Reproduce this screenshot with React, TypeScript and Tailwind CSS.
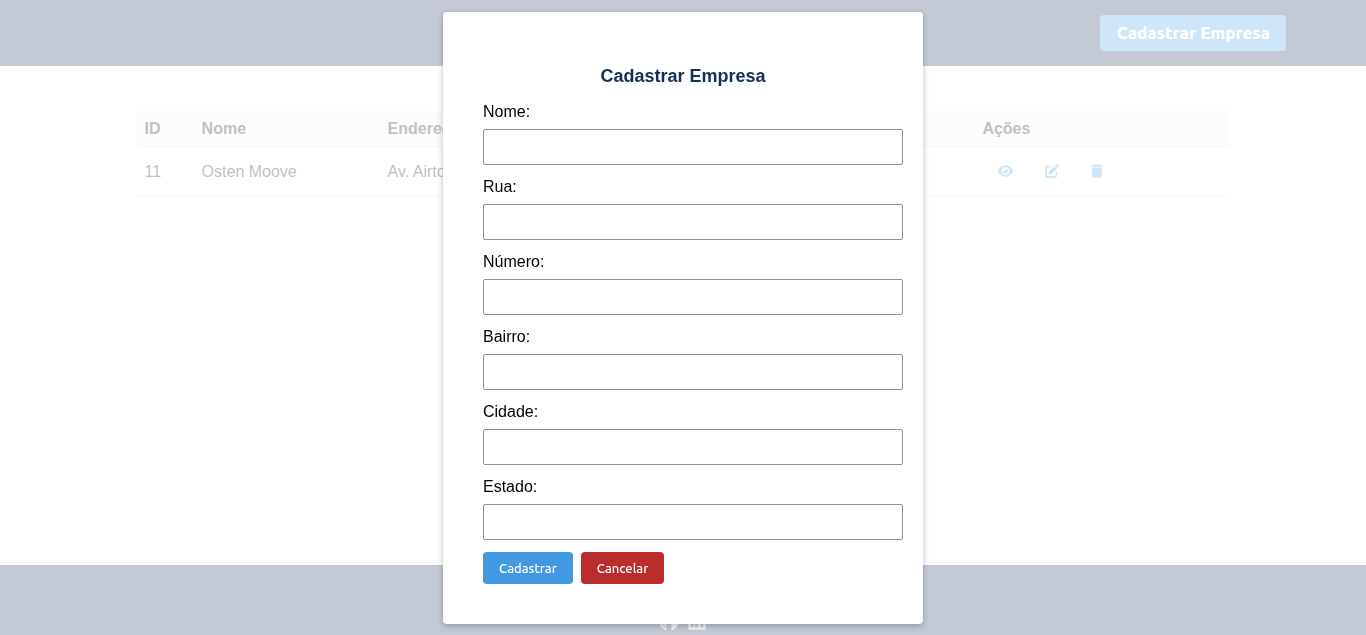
import { FaEye, FaGithub, FaLinkedin, FaPenToSquare, FaTrash } from "react-icons/fa6";

const fields = [
  { id: "nome", label: "Nome:" },
  { id: "rua", label: "Rua:" },
  { id: "numero", label: "Número:" },
  { id: "bairro", label: "Bairro:" },
  { id: "cidade", label: "Cidade:" },
  { id: "estado", label: "Estado:" },
];

const companies = [{ id: 11, name: "Osten Moove", address: "Av. Airton Senna" }];

function Header() {
  return (
    <header className="flex h-[66px] items-center justify-end bg-[#132e5a] px-20">
      <button
        type="button"
        className="h-9 rounded bg-[#4299e1] px-4 font-['Ubuntu','Noto_Sans',sans-serif] text-[17px] font-extrabold text-white"
      >
        Cadastrar Empresa
      </button>
    </header>
  );
}

function CompanyTable() {
  return (
    <table className="mx-auto mt-[45px] w-4/5 table-fixed border-collapse text-left">
      <thead>
        <tr className="h-[35px] border-b border-[#dddddd] bg-[#f2f2f2]">
          <th className="w-[57px] px-2 pt-0.5">ID</th>
          <th className="w-[186px] px-2 pt-0.5">Nome</th>
          <th className="px-2 pt-0.5">Endereço</th>
          <th className="w-[255px] px-2 pt-0.5">Ações</th>
        </tr>
      </thead>
      <tbody>
        {companies.map((company) => (
          <tr key={company.id} className="h-[49px] border-b border-[#dddddd]">
            <td className="px-2 pt-0.5">{company.id}</td>
            <td className="px-2 pt-0.5">{company.name}</td>
            <td className="px-2 pt-0.5">{company.address}</td>
            <td className="px-2">
              <div className="flex text-[#4299e1]">
                <button type="button" aria-label="Visualizar" className="px-4">
                  <FaEye className="h-3.5 w-[15px]" />
                </button>
                <button type="button" aria-label="Editar" className="px-4">
                  <FaPenToSquare className="h-3.5 w-3.5" />
                </button>
                <button type="button" aria-label="Excluir" className="px-4">
                  <FaTrash className="h-3.5 w-3" />
                </button>
              </div>
            </td>
          </tr>
        ))}
      </tbody>
    </table>
  );
}

function Footer() {
  return (
    <footer className="flex h-[70px] items-end justify-center gap-2 bg-[#132e5a] pb-1 text-[#dddddd]">
      <a href="#github" aria-label="GitHub">
        <FaGithub className="h-5 w-5" />
      </a>
      <a href="#linkedin" aria-label="LinkedIn">
        <FaLinkedin className="h-5 w-5" />
      </a>
    </footer>
  );
}

function CompanyDialog() {
  return (
    <div className="fixed inset-0 flex items-start justify-center overflow-hidden bg-white/75 pt-3">
      <form
        role="dialog"
        aria-labelledby="dialog-title"
        className="w-[480px] rounded bg-white p-10 shadow-[0_2px_6px_rgba(0,0,0,0.26)]"
      >
        <h2 id="dialog-title" className="my-3 text-center text-lg leading-6 font-bold text-[#132e5a]">
          Cadastrar Empresa
        </h2>
        <div className="-mr-5 flex flex-col gap-2.5">
          {fields.map((field) => (
            <div key={field.id} className="flex flex-col gap-[5px]">
              <label htmlFor={field.id}>{field.label}</label>
              <input
                id={field.id}
                name={field.id}
                type="text"
                className="h-9 rounded-xs border border-[#8f8f9d] bg-white px-2 outline-none"
              />
            </div>
          ))}
        </div>
        <div className="mt-3 flex gap-2 font-['Ubuntu','Noto_Sans',sans-serif] text-[13px] font-medium text-white">
          <button type="button" className="h-8 rounded bg-[#4299e1] px-4 pt-0.5">
            Cadastrar
          </button>
          <button type="button" className="h-8 rounded bg-[#bb2c2c] px-4 pt-0.5">
            Cancelar
          </button>
        </div>
      </form>
    </div>
  );
}

export default function App() {
  return (
    <div className="flex min-h-screen flex-col bg-white font-['Liberation_Sans',Arial,sans-serif] text-base text-black">
      <Header />
      <main className="flex-1">
        <CompanyTable />
      </main>
      <Footer />
      <CompanyDialog />
    </div>
  );
}
